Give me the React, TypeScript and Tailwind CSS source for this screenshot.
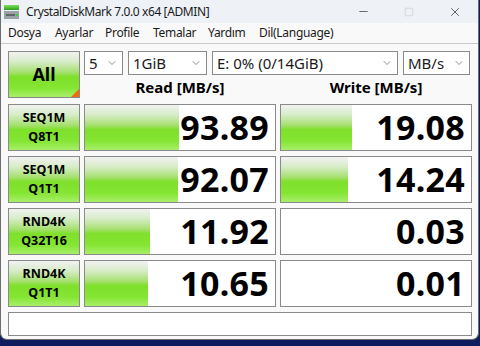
import { ChevronDown, Minus, Square, X } from "lucide-react";

const GREEN =
  "bg-[linear-gradient(to_bottom,#f2f2f2_0%,#d6ecc6_22%,#a6e070_45%,#7ee02a_55%,#84e632_80%,#a8ee6a_100%)]";

const ROWS = [
  { l1: "SEQ1M", l2: "Q8T1", read: "93.89", rw: 94, write: "19.08", ww: 71 },
  { l1: "SEQ1M", l2: "Q1T1", read: "92.07", rw: 93, write: "14.24", ww: 67 },
  { l1: "RND4K", l2: "Q32T16", read: "11.92", rw: 65, write: "0.03", ww: 0 },
  { l1: "RND4K", l2: "Q1T1", read: "10.65", rw: 63, write: "0.01", ww: 0 },
];

const MENU = [
  { t: "Dosya", w: "w-[47px]" },
  { t: "Ayarlar", w: "w-[50px]" },
  { t: "Profile", w: "w-[48px]" },
  { t: "Temalar", w: "w-[55px]" },
  { t: "Yardım", w: "w-[51px]" },
  { t: "Dil(Language)", w: "" },
];

function AppIcon() {
  return (
    <svg width="17" height="16" viewBox="0 0 17 16">
      <defs>
        <linearGradient id="g" x1="0" y1="0" x2="0" y2="1">
          <stop offset="0" stopColor="#7fe05a" />
          <stop offset="1" stopColor="#2f9e1e" />
        </linearGradient>
      </defs>
      <rect x="1" y="1" width="15" height="5" fill="url(#g)" />
      <rect x="1" y="7" width="15" height="8" fill="#9aa2a6" />
      <rect x="3" y="10" width="9" height="2" fill="#5d666b" />
      <rect x="13" y="10" width="2" height="2" fill="#37d037" />
    </svg>
  );
}

function Select({ w, label }: { w: string; label: string }) {
  return (
    <div className={`${w} h-[24px] bg-white border border-[#8a8a8a] flex items-center justify-between pl-[4px] pr-[4px]`}>
      <span className="text-[15px] text-[#1a1a1a] leading-none">{label}</span>
      <ChevronDown size={12} strokeWidth={1.5} className="text-[#6a6a6a]" />
    </div>
  );
}

function ValueBox({ value, bar }: { value: string; bar: number }) {
  return (
    <div className="relative h-[47px] bg-white border border-[#8a8a8a] flex items-center justify-end pr-[6px]">
      {bar > 0 && <div className={`absolute left-0 top-0 bottom-0 ${GREEN}`} style={{ width: bar }} />}
      <span className="relative text-[34px] font-bold text-black leading-none tracking-[0.3px]">{value}</span>
    </div>
  );
}

export default function App() {
  return (
    <div className="w-[480px] h-[346px] bg-[#0d1c5c] overflow-hidden" style={{ fontFamily: '"Noto Sans", "Liberation Sans", sans-serif' }}>
      <div className="w-[479px] h-[340px] bg-[#f9f9f9] border-l border-r border-b border-[#6e6e6e] rounded-b-[7px] flex flex-col">
        {/* Title bar */}
        <div className="h-[23px] bg-[#eef2f7] flex items-center pl-[2px]">
          <AppIcon />
          <span className="ml-[6px] text-[12px] tracking-[-0.4px] text-[#1a1a1a]">CrystalDiskMark 7.0.0 x64 [ADMIN]</span>
          <div className="ml-auto flex items-center">
            <div className="w-[46px] flex justify-center"><Minus size={13} strokeWidth={1.2} className="text-[#222]" /></div>
            <div className="w-[46px] flex justify-center"><Square size={10} strokeWidth={1.3} className="text-[#c4c4c4]" /></div>
            <div className="w-[46px] flex justify-center"><X size={14} strokeWidth={1.2} className="text-[#222]" /></div>
          </div>
        </div>
        {/* Menu */}
        <div className="h-[21px] bg-[#f9f9f9] border-b border-[#c9c9c9] flex items-center pl-[7px] text-[12px] tracking-[-0.3px] text-[#1a1a1a]">
          {MENU.map((m) => (
            <span key={m.t} className={m.w}>{m.t}</span>
          ))}
        </div>
        {/* Content */}
        <div className="pl-[7px] pt-[7px] grid grid-cols-[72px_192px_192px] gap-x-[4px] gap-y-[5px]">
          <div className={`relative h-[47px] border border-[#8a8a8a] ${GREEN} flex items-center justify-center`}>
            <span className="text-[18px] font-bold text-black">All</span>
            <div className="absolute right-0 bottom-0 w-0 h-0 border-l-[8px] border-l-transparent border-b-[8px] border-b-[#f06a10]" />
          </div>
          <div className="col-span-2 flex flex-col">
            <div className="flex gap-[5px]">
              <Select w="w-[39px]" label="5" />
              <Select w="w-[79px]" label="1GiB" />
              <Select w="w-[186px]" label="E: 0% (0/14GiB)" />
              <Select w="w-[67px]" label="MB/s" />
            </div>
            <div className="flex-1 grid grid-cols-2 gap-x-[4px] items-center text-[15px] font-bold text-black text-center">
              <span className="pt-[1px]">Read [MB/s]</span>
              <span className="pt-[1px]">Write [MB/s]</span>
            </div>
          </div>
          {ROWS.map((r, i) => (
            <div key={i} className="contents">
              <div className={`h-[47px] border border-[#8a8a8a] ${GREEN} flex flex-col items-center justify-center text-[12.5px] font-bold text-black leading-[19px]`}>
                <span>{r.l1}</span>
                <span>{r.l2}</span>
              </div>
              <ValueBox value={r.read} bar={r.rw} />
              <ValueBox value={r.write} bar={r.ww} />
            </div>
          ))}
          <div className="col-span-3 h-[24px] bg-white border border-[#8a8a8a]" />
        </div>
      </div>
    </div>
  );
}
